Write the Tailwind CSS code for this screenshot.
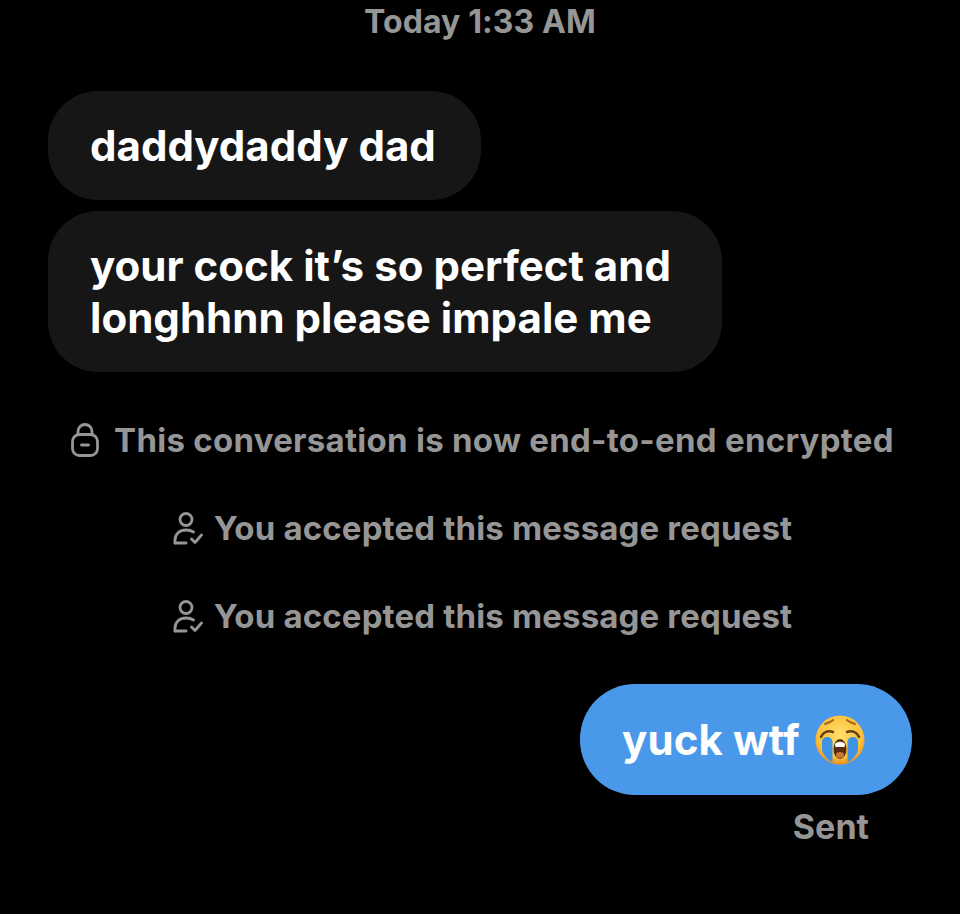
<!DOCTYPE html>
<html lang="en">
  <head>
    <meta charset="UTF-8" />
    <meta name="viewport" content="width=device-width, initial-scale=1.0" />
    <title>Messages</title>
    <script src="https://cdn.jsdelivr.net/npm/@tailwindcss/browser@4"></script>
  </head>
  <body class="bg-black font-['Inter',sans-serif] font-bold">
    <main class="flex flex-col w-[960px] h-[914px] overflow-hidden px-12">
      <!-- Timestamp -->
      <p class="h-[44px] text-center text-[32px] leading-[44px] tracking-[0.1px] text-[#969696]">Today 1:33 AM</p>

      <!-- Received -->
      <div class="flex flex-col items-start gap-[11px] mt-[47px] text-[42px] leading-[52px] tracking-[0.02px] text-white">
        <div class="flex items-center h-[109px] w-[433px] px-[42px] rounded-[50px] bg-[#161616]">daddydaddy dad</div>
        <div class="flex items-center h-[161px] w-[674px] px-[42px] rounded-[50px] bg-[#161616]">
          <p>your cock it’s so perfect and<br />longhhnn please impale me</p>
        </div>
      </div>

      <!-- System notices -->
      <div class="flex flex-col gap-[44px] mt-[46px] pl-[5px] text-[33px] leading-[44px] text-[#969696]">
        <div class="flex items-center justify-center gap-[15px] tracking-[0.27px]">
          <svg width="28" height="34" viewBox="0 0 28 34" fill="none" stroke="#969696" stroke-width="2.800" stroke-linecap="round">
            <rect x="1.500" y="11.500" width="25" height="21" rx="7" />
            <path d="M7 11.500V8.500a7 7 0 0 1 14 0v3" />
            <path d="M10.500 22h7" />
          </svg>
          <span>This conversation is now end-to-end encrypted</span>
        </div>
        <div class="flex items-center justify-center gap-[11px] tracking-[0.15px]">
          <svg width="30" height="33" viewBox="0 0 30 33" fill="none" stroke="#969696" stroke-width="2.800" stroke-linecap="round" stroke-linejoin="round">
            <circle cx="13" cy="7.500" r="6" />
            <path d="M2 31v-3c0-6 4.500-10 11-10 3 0 5.500 .7 7.500 2" />
            <path d="M2 31h11" />
            <path d="M18.500 27l3.500 3.500L28.500 23" />
          </svg>
          <span>You accepted this message request</span>
        </div>
        <div class="flex items-center justify-center gap-[11px] tracking-[0.15px]">
          <svg width="30" height="33" viewBox="0 0 30 33" fill="none" stroke="#969696" stroke-width="2.800" stroke-linecap="round" stroke-linejoin="round">
            <circle cx="13" cy="7.500" r="6" />
            <path d="M2 31v-3c0-6 4.500-10 11-10 3 0 5.500 .7 7.500 2" />
            <path d="M2 31h11" />
            <path d="M18.500 27l3.500 3.500L28.500 23" />
          </svg>
          <span>You accepted this message request</span>
        </div>
      </div>

      <!-- Sent -->
      <div class="flex flex-col items-end mt-[46px]">
        <div class="flex items-center justify-between h-[111px] w-[332px] pl-[42px] pr-[47px] rounded-[55px] bg-[#4a98ea] text-[42px] leading-[52px] tracking-[0.1px] text-white">
          <span>yuck wtf</span>
          <svg width="50" height="50" viewBox="0 0 50 50">
            <defs>
              <radialGradient id="face" cx="50%" cy="40%" r="60%">
                <stop offset="0%" stop-color="#ffdf6a" />
                <stop offset="75%" stop-color="#fbc13b" />
                <stop offset="100%" stop-color="#ee8f1c" />
              </radialGradient>
            </defs>
            <circle cx="25" cy="25" r="24.500" fill="url(#face)" />
            <path d="M7 27c0-3 2-5 5-5s5.500 2 5.500 5v20c-5-2-8-6-10.500-11zM32.500 27c0-3 2.500-5 5.500-5s5 2 5 5v9c-2.500 5-5.500 9-10.500 11z" fill="#3f93e6" />
            <path d="M6 22c2-5 7-7 12-5M32 17c5-2 10 0 12 5" fill="none" stroke="#6b3f12" stroke-width="2.500" stroke-linecap="round" />
            <path d="M10 9c3-1 6-2 8-4M32 5c2 2 5 3 8 4" fill="none" stroke="#a8681c" stroke-width="2" stroke-linecap="round" />
            <ellipse cx="25" cy="34" rx="6.500" ry="10" fill="#5a2c0e" />
            <path d="M20 29c2-3 8-3 10 0l-.5 3h-9z" fill="#fff" />
            <ellipse cx="25" cy="40" rx="4" ry="3" fill="#c9763a" />
          </svg>
        </div>
        <p class="mt-[10px] mr-[43px] text-[34px] leading-[44px] text-[#969696]">Sent</p>
      </div>
    </main>
  </body>
</html>
